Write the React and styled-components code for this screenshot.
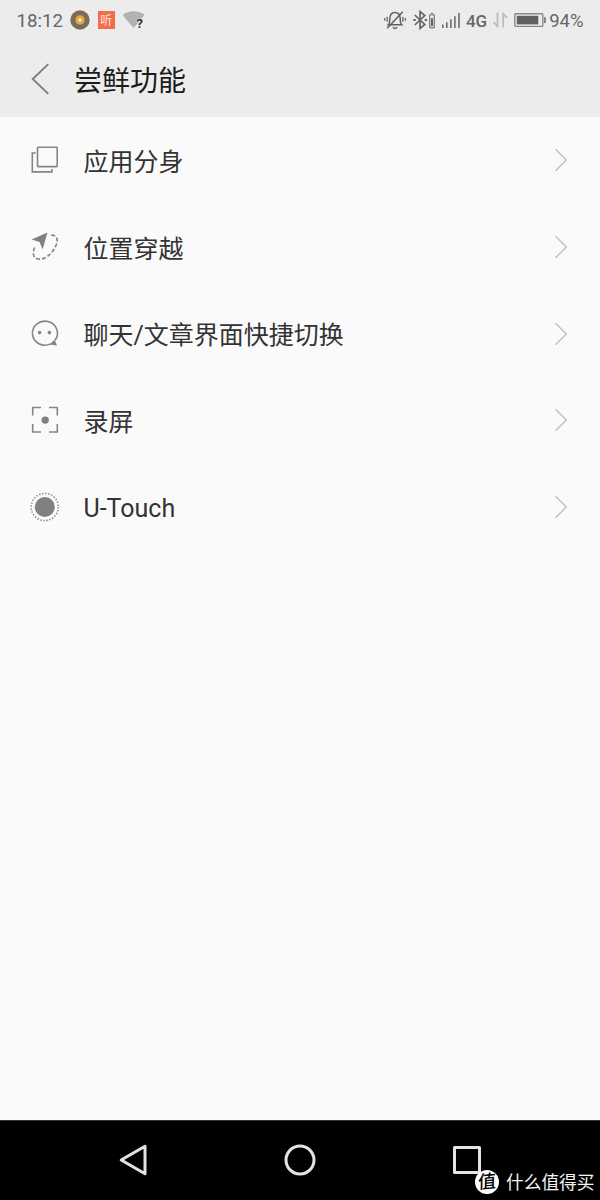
import React from "react";
import styled, { createGlobalStyle } from "styled-components";

const GlobalStyle = createGlobalStyle`
  * { box-sizing: border-box; }
  body { margin: 0; background: #fafafa; }
  svg { display: block; flex: none; overflow: visible; }
`;

const Screen = styled.div`
  display: flex;
  flex-direction: column;
  width: 600px;
  height: 1200px;
  background: #fafafa;
  font-family: Roboto, "Noto Sans CJK SC", sans-serif;
  overflow: hidden;
`;

const Header = styled.header`
  height: 117px;
  flex: none;
  background: #ececec;
`;

const StatusBar = styled.div`
  display: flex;
  align-items: center;
  justify-content: space-between;
  height: 40px;
  padding: 0 16.5px 0 16.5px;
  color: #666;
`;

const StatusGroup = styled.div`
  display: flex;
  align-items: center;
  gap: ${(p) => p.$gap}px;
`;

const StatusText = styled.span`
  font-size: ${(p) => p.$size || 18.7}px;
  font-weight: ${(p) => p.$weight || 400};
  line-height: 22px;
  padding-top: 1px;
  margin-left: ${(p) => p.$shift || 0}px;
  white-space: nowrap;
`;

const ListenBadge = styled.span`
  display: flex;
  align-items: center;
  justify-content: center;
  width: 17px;
  height: 18px;
  padding-top: 2px;
  background: #f76c48;
  color: #ffe9e0;
  font-size: 12px;
  line-height: 18px;
`;

const TitleBar = styled.div`
  display: flex;
  align-items: center;
  gap: 24px;
  height: 77px;
  padding-left: 31px;
`;

const Title = styled.h1`
  margin: 0;
  padding-top: 7px;
  font-size: 28px;
  font-weight: 400;
  line-height: 40px;
  color: #1c1c1c;
`;

const List = styled.main`
  flex: 1;
`;

const Row = styled.div`
  display: flex;
  align-items: center;
  height: 86.7px;
  padding: 0 32px 0 30px;
`;

const Label = styled.span`
  flex: 1;
  margin-left: 23.5px;
  padding-top: ${(p) => (p.$latin ? 3 : 5)}px;
  font-size: 25px;
  line-height: 36px;
  color: #333;
`;

const NavBar = styled.nav`
  position: relative;
  display: flex;
  align-items: center;
  justify-content: space-between;
  height: 80px;
  flex: none;
  padding: 0 118px 1px;
  background: #000;
  border-top: 1px solid #333;
`;

const Watermark = styled.div`
  position: absolute;
  right: 5.5px;
  bottom: 4px;
  display: flex;
  align-items: center;
  gap: 7.5px;
  color: #f4f4f4;
  font-size: 17.7px;
  line-height: 26px;
`;

const WatermarkText = styled.span`
  padding-top: 2px;
`;

const WatermarkBadge = styled.span`
  display: flex;
  align-items: center;
  justify-content: center;
  width: 24px;
  height: 24px;
  border-radius: 50%;
  background: #fff;
  color: #000;
  font-size: 18px;
  font-weight: 500;
  line-height: 24px;
`;

const BadgeGlyph = styled.span`
  transform: rotate(-5deg) skewX(-6deg);
`;

const Disc = () => (
  <svg width="20" height="20" viewBox="0 0 20 20">
    <circle cx="10" cy="10" r="9.7" fill="#796c59" />
    <circle cx="10" cy="10" r="4.7" fill="#e2a840" />
    <circle cx="10" cy="10" r="1.7" fill="#fff2cf" />
  </svg>
);

const Wifi = () => (
  <svg width="22" height="18" viewBox="0 0 22 18">
    <path d="M.6 4.1C6.600-.9 16.600-.9 22.600 4.1L11.600 17Z" fill="#b2b2b2" />
    <text x="14.2" y="16.5" fontSize="13.5" fontWeight="700" fill="#333" stroke="#ececec" strokeWidth="1" paintOrder="stroke">?</text>
  </svg>
);

const BellOff = () => (
  <svg width="22" height="20" viewBox="0 0 22 20" fill="none" stroke="#5f5f5f" strokeWidth="1.5">
    <path d="M4.3 14.7C6 13.2 5.6 11 5.8 8.2C6.1 4.3 8.2 2.4 11 2.4s4.9 1.9 5.2 5.8c.2 2.8-.2 5 1.5 6.5ZM9 17.2c1 1.6 3 1.6 4 0" />
    <path d="M18.8 1.8 3.2 18.2" />
    <path d="M3.2 6.8v5M.8 8v2.8M18.9 6.8v5M21.3 8v2.8" strokeWidth="1.2" />
  </svg>
);

const Bluetooth = () => (
  <svg width="22" height="20" viewBox="0 0 22 20" fill="none" stroke="#666" strokeWidth="1.7">
    <path d="m1.8 5 10 9.500-4.700 4V1.500l4.700 4L1.800 15" />
    <path d="M.3 10h2.4M11.700 10h2.400" strokeWidth="2" />
    <path d="M16.7 4.8h4.6v13h-4.6ZM18 3.2h2" strokeWidth="1" />
    <path d="M19 8.2v8" strokeWidth="2.2" />
  </svg>
);

const Signal = () => (
  <svg width="18" height="16" viewBox="0 0 18 16" stroke="#666" strokeWidth="1.5">
    <path d="M.8 12.5V16M4.8 10.3V16M8.9 7.3V16M12.9 4.3V16M17 1V16" />
  </svg>
);

const DataArrows = () => (
  <svg width="15" height="16" viewBox="0 0 15 16" fill="none" stroke="#bcbcbc" strokeWidth="1.8">
    <path d="M4.5 .5V14.3L.6 10.2M10.2 15.5V1.7l3.9 4.1" />
  </svg>
);

const Battery = () => (
  <svg width="32" height="16" viewBox="0 0 32 16">
    <rect x=".8" y="1.8" width="28" height="12.6" rx="1" fill="none" stroke="#888" strokeWidth="1.4" />
    <rect x="2.8" y="3.8" width="21.5" height="8.6" fill="#606060" />
    <path d="M30.2 5.3h1.5v5.8h-1.5Z" fill="#666" />
  </svg>
);

const Back = () => (
  <svg width="19" height="32" viewBox="0 0 19 32" fill="none" stroke="#7d7d7d" strokeWidth="1.8">
    <path d="M17.3 1.2 1.7 16l15.6 14.8" />
  </svg>
);

const Chevron = () => (
  <svg width="14" height="24" viewBox="0 0 14 24" fill="none" stroke="#c2c2c2" strokeWidth="1.5">
    <path d="M1.5 1.2 12.3 12 1.5 22.8" />
  </svg>
);

const RowIcon = ({ children }) => (
  <svg width="30" height="30" viewBox="0 0 30 30" fill="none" stroke="#858585" strokeWidth="1.6">
    {children}
  </svg>
);

const icons = {
  clone: (
    <>
      <rect x="7.5" y="2.2" width="19.7" height="19.4" rx=".6" />
      <path d="M5.7 8H2.3v18.9h19.7V24" />
    </>
  ),
  location: (
    <>
      <path d="M17.5.6 1.6 7.6l8 2.5 3 7.2Z" fill="#808080" stroke="none" />
      <path d="M21.2 3.2C27.3 3 28.7 8.2 25.5 14.5C21.5 23 14 28 8 27C2.5 26 2.4 20 5.2 14.2" strokeWidth="1.7" strokeDasharray="4 2" />
    </>
  ),
  chat: (
    <>
      <path d="M25.2 21A12.5 12 0 1 0 20.5 24.9" />
      <path d="M26.3 19.8 25.2 22.3 27 26.6 19.3 25.5 23.5 21.8Z" fill="#858585" stroke="none" />
      <circle cx="9.6" cy="13.6" r="1.8" fill="#858585" stroke="none" />
      <circle cx="19.4" cy="13.6" r="1.8" fill="#858585" stroke="none" />
    </>
  ),
  record: (
    <>
      <path d="M2.7 10.5V2.5H11M19 2.5h8.3v8M27.3 19v8H19M11 27H2.7v-8" />
      <circle cx="15.2" cy="15.1" r="3.7" fill="#808080" stroke="none" />
    </>
  ),
  touch: (
    <>
      <circle cx="14.8" cy="15" r="10" fill="#808080" stroke="none" />
      <circle cx="14.8" cy="15" r="13.6" strokeWidth="1.5" strokeDasharray="1.4 1.65" />
    </>
  ),
};

const items = [
  { icon: "clone", label: "应用分身" },
  { icon: "location", label: "位置穿越" },
  { icon: "chat", label: "聊天/文章界面快捷切换" },
  { icon: "record", label: "录屏" },
  { icon: "touch", label: "U-Touch", latin: true },
];

export default function App() {
  return (
    <Screen>
      <GlobalStyle />
      <Header>
        <StatusBar>
          <StatusGroup $gap={7.3}>
            <StatusText>18:12</StatusText>
            <Disc />
            <ListenBadge>听</ListenBadge>
            <Wifi />
          </StatusGroup>
          <StatusGroup $gap={6}>
            <StatusGroup $gap={7}>
              <BellOff />
              <Bluetooth />
              <Signal />
            </StatusGroup>
            <StatusText $size={17} $weight={500}>4G</StatusText>
            <DataArrows />
            <Battery />
            <StatusText $size={18.5} $shift={-3}>94%</StatusText>
          </StatusGroup>
        </StatusBar>
        <TitleBar>
          <Back />
          <Title>尝鲜功能</Title>
        </TitleBar>
      </Header>
      <List>
        {items.map((item) => (
          <Row key={item.label}>
            <RowIcon>{icons[item.icon]}</RowIcon>
            <Label $latin={item.latin}>{item.label}</Label>
            <Chevron />
          </Row>
        ))}
      </List>
      <NavBar>
        <svg width="30" height="32" viewBox="0 0 30 32" fill="none" stroke="#e4e4e4" strokeWidth="3" strokeLinejoin="round">
          <path d="M27 2.2v27.6L3.2 16Z" />
        </svg>
        <svg width="32" height="32" viewBox="0 0 32 32" fill="none" stroke="#e4e4e4" strokeWidth="3">
          <circle cx="16" cy="16" r="14" />
        </svg>
        <svg width="30" height="30" viewBox="0 0 30 30" fill="none" stroke="#e4e4e4" strokeWidth="3" strokeLinejoin="round">
          <rect x="2.5" y="2.5" width="25" height="25" />
        </svg>
        <Watermark>
          <WatermarkBadge>
            <BadgeGlyph>值</BadgeGlyph>
          </WatermarkBadge>
          <WatermarkText>什么值得买</WatermarkText>
        </Watermark>
      </NavBar>
    </Screen>
  );
}
